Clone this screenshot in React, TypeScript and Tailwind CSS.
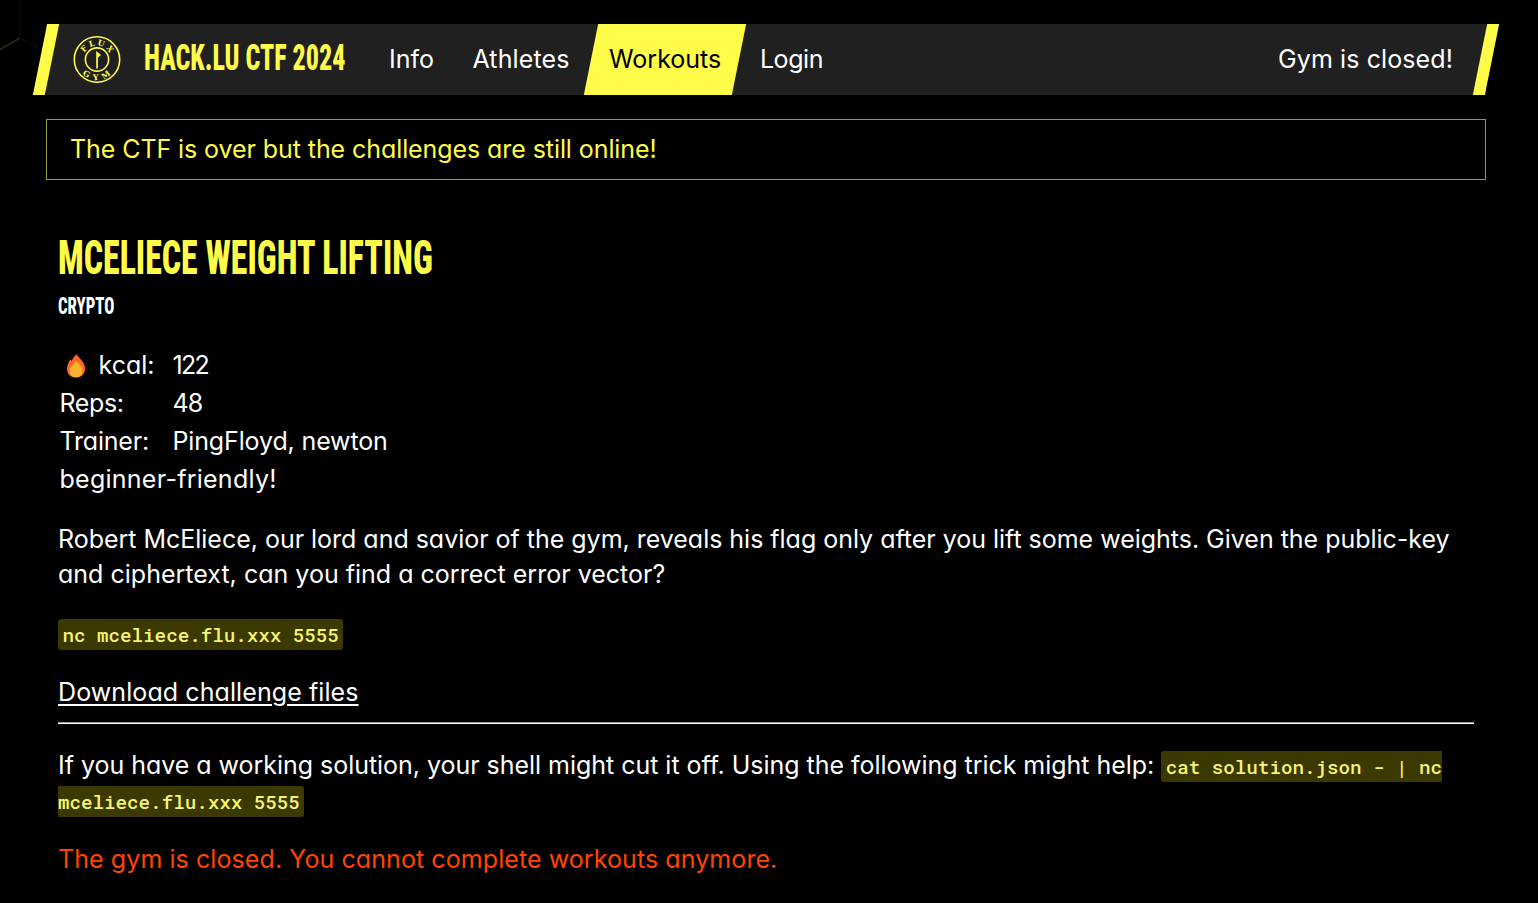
import type { ReactNode } from "react";

function Logo() {
  return (
    <svg viewBox="0 0 48 48" className="ml-[26.5px] h-12 w-12 shrink-0" aria-label="Flux Gym">
      <defs>
        <path id="arc-top" d="M10 23.5 A14 14 0 0 1 38 23.5" />
        <path id="arc-bottom" d="M3.6 23.5 A20.4 20.4 0 0 0 44.4 23.5" />
      </defs>
      <g fill="none" stroke="#fffd4a" strokeWidth="1.6">
        <circle cx="24" cy="23.5" r="22.7" />
        <circle cx="24" cy="23.5" r="11.6" />
      </g>
      <path d="M23.2 15 L28 19 L24.9 21.7 L24.9 32.5 L23.2 32.5 Z" fill="#fffd4a" />
      <g fill="#fffd4a" fontFamily="DejaVu Serif, serif" fontWeight="700" fontSize="8" textAnchor="middle">
        <text letterSpacing="2.2"><textPath href="#arc-top" startOffset="52.5%">FLUX</textPath></text>
        <text letterSpacing="4.8"><textPath href="#arc-bottom" startOffset="53.5%">GYM</textPath></text>
      </g>
    </svg>
  );
}

function Flame() {
  return (
    <svg viewBox="0 0 20 24" className="ml-1.5 mr-[13px] h-6 w-5 shrink-0 translate-y-px" aria-hidden="true">
      <path d="M10.4 0.3 C11.6 2.6 14 3.9 15.6 6.4 C17.7 8.6 19.2 11.6 19 15.2 C18.8 20.2 15.2 23.6 10 23.6 C4.8 23.6 1 20.2 1 15 C1 11.4 2.6 7.8 4.6 5.2 C5.2 6 5.4 6.6 5.6 7.4 C6.8 4.2 8.6 2 10.4 0.3 Z" fill="#ff6723" />
      <path d="M10.2 6.8 C12.4 9.2 16.4 12.4 16.4 17 C16.4 20.8 13.8 23.2 10.1 23.2 C6.2 23.2 3.6 20.8 3.6 17 C3.6 12.8 7.4 9.8 10.2 6.8 Z" fill="#ffb02e" />
    </svg>
  );
}

function Code({ children }: { children: ReactNode }) {
  return (
    <code className="rounded-[3px] bg-[#3b3800] px-[4.5px] py-[3px] font-['Roboto_Mono',monospace] text-[19.2px] font-medium leading-none tracking-normal text-[#f6f474]">
      {children}
    </code>
  );
}

function Stripe({ className }: { className: string }) {
  return <div className={`h-full w-3 shrink-0 -skew-x-[11.4deg] bg-[#fffd4a] ${className}`} />;
}

export default function App() {
  return (
    <div className="relative h-[903px] w-full overflow-hidden bg-black font-['Inter',sans-serif] text-[25px] leading-[35px] text-white [font-feature-settings:'cv11']">
      <svg className="absolute left-0 top-0 h-[52px] w-10" viewBox="0 0 40 52" fill="none" aria-hidden="true">
        <path d="M0 49.5 L20 38" stroke="#2c2b0e" strokeWidth="1.6" />
        <path d="M20 0 V38 L38 48" stroke="#0c0c04" strokeWidth="1.6" />
      </svg>

      <div className="relative ml-[46px] w-[1440px]">
        <header className="mt-6 flex h-[71px] items-center bg-[#202020]">
          <Stripe className="-ml-1.5" />
          <div className="flex h-full flex-1 items-center">
            <div className="-ml-1.5 flex items-center">
              <Logo />
              <div className="ml-[23px] w-[227px]">
                <span className="inline-block origin-left scale-x-[0.712] whitespace-nowrap font-['Roboto_Condensed',sans-serif] text-[36.5px] font-extrabold text-[#fffd4a]">
                  HACK.LU CTF 2024
                </span>
              </div>
            </div>
            <nav className="flex h-full items-center text-center">
              <a className="w-[81px] pl-px tracking-[-0.05px]">Info</a>
              <a className="w-[139px] tracking-[0.12px]">Athletes</a>
              <a className="flex h-full w-[148px] -skew-x-[11.4deg] items-center justify-center bg-[#fffd4a] text-black">
                <span className="skew-x-[11.4deg]">Workouts</span>
              </a>
              <a className="w-[105px] pl-px tracking-[-0.42px]">Login</a>
            </nav>
            <span className="ml-auto mr-[27px] tracking-[0.1px]">Gym is closed!</span>
          </div>
          <Stripe className="-mr-1.5" />
        </header>

        <div className="mt-6 flex h-[61px] items-center border border-[#99982c] pl-[23px] tracking-[-0.08px] text-[#fffd4a]">
          The CTF is over but the challenges are still online!
        </div>

        <main className="px-3 pt-[54px]">
          <h1 className="w-max origin-left scale-x-[0.706] font-['Roboto_Condensed',sans-serif] text-[48px] font-extrabold leading-[48px] text-[#fffd4a]">
            MCELIECE WEIGHT LIFTING
          </h1>
          <h2 className="mt-3 w-max origin-left scale-x-[0.698] font-['Roboto_Condensed',sans-serif] text-[24px] font-extrabold leading-6">
            CRYPTO
          </h2>

          <dl className="mt-7 grid grid-cols-[113px_1fr] pl-[1.5px] leading-[38px]">
            <dt className="flex items-center"><Flame />kcal:</dt>
            <dd className="tracking-[-1.7px]">122</dd>
            <dt className="tracking-[-0.4px]">Reps:</dt>
            <dd className="tracking-[-0.8px]">48</dd>
            <dt className="tracking-[-0.2px]">Trainer:</dt>
            <dd className="tracking-[-0.14px]">PingFloyd, newton</dd>
            <dt className="col-span-2 tracking-[0.26px]">beginner-friendly!</dt>
          </dl>

          <p className="mt-6">
            <span className="tracking-[-0.02px]">Robert McEliece, our lord and savior of the gym, reveals his flag only after you lift some weights. Given the public-key </span>
            <span className="tracking-[0.01px]">and ciphertext, can you find a correct error vector?</span>
          </p>
          <p className="mt-6"><Code>nc mceliece.flu.xxx 5555</Code></p>
          <p className="mt-6">
            <a className="tracking-[0.09px] underline decoration-2 underline-offset-[3px]">Download challenge files</a>
          </p>
          <hr className="mt-3 h-0.5 border-0 border-t border-t-[#9a9a9a] bg-white" />
          <p className="mt-6">
            <span className="tracking-[-0.03px]">If you have a working solution, your shell might cut it off. Using the following trick might help: </span>
            <Code>cat solution.json - | nc mceliece.flu.xxx 5555</Code>
          </p>
          <p className="mt-6 tracking-[0.08px] text-[#ff4500]">The gym is closed. You cannot complete workouts anymore.</p>
        </main>
      </div>
    </div>
  );
}
